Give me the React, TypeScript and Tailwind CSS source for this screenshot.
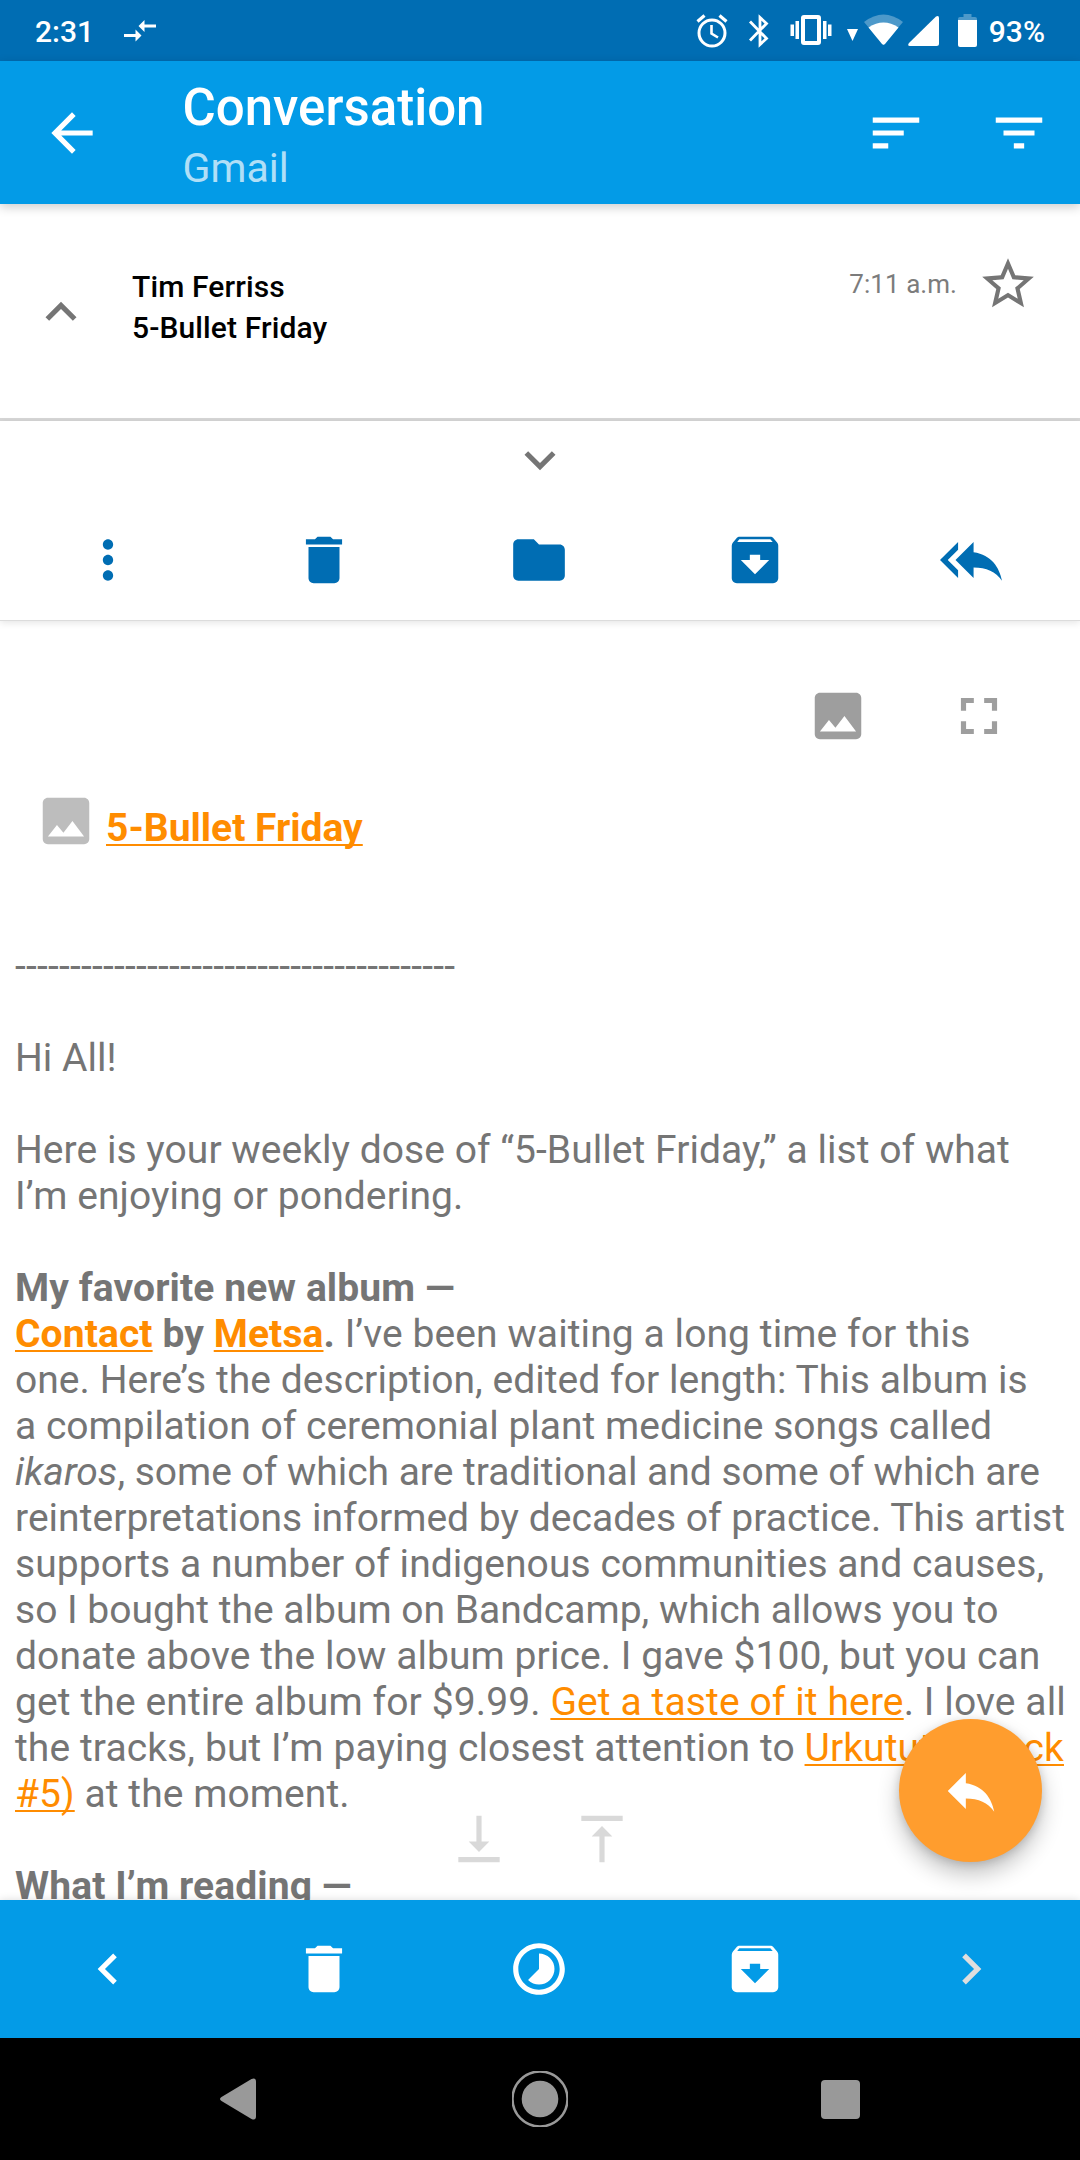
import type { ReactNode } from "react";

const paths = {
  back: "M20 11H7.83l5.59-5.59L12 4l-8 8 8 8 1.41-1.41L7.83 13H20v-2z",
  sort: "M3 18h6v-2H3v2zM3 6v2h18V6H3zm0 7h12v-2H3v2z",
  filter: "M10 18h4v-2h-4v2zM3 6v2h18V6H3zm3 7h12v-2H6v2z",
  up: "M12 8l-6 6 1.41 1.41L12 10.83l4.59 4.58L18 14z",
  down: "M16.59 8.59L12 13.17 7.41 8.59 6 10l6 6 6-6z",
  left: "M15.41 7.41L14 6l-6 6 6 6 1.41-1.41L10.83 12z",
  right: "M10 6L8.59 7.41 13.17 12l-4.58 4.59L10 18l6-6z",
  star: "M22 9.24l-7.19-.62L12 2 9.19 8.63 2 9.24l5.46 4.73L5.82 21 12 17.27 18.18 21l-1.63-7.03L22 9.24zM12 15.4l-3.76 2.27 1-4.28-3.32-2.88 4.38-.38L12 6.1l1.71 4.04 4.38.38-3.32 2.88 1 4.28L12 15.4z",
  more: "M12 8c1.1 0 2-.9 2-2s-.9-2-2-2-2 .9-2 2 .9 2 2 2zm0 2c-1.1 0-2 .9-2 2s.9 2 2 2 2-.9 2-2-.9-2-2-2zm0 6c-1.1 0-2 .9-2 2s.9 2 2 2 2-.9 2-2-.9-2-2-2z",
  trash: "M6 19c0 1.1.9 2 2 2h8c1.1 0 2-.9 2-2V7H6v12zM19 4h-3.5l-1-1h-5l-1 1H5v2h14V4z",
  folder: "M10 4H4c-1.1 0-1.99.9-1.99 2L2 18c0 1.1.9 2 2 2h16c1.1 0 2-.9 2-2V8c0-1.1-.9-2-2-2h-8l-2-2z",
  archive: "M20.54 5.23l-1.39-1.68C18.88 3.21 18.47 3 18 3H6c-.47 0-.88.21-1.16.55L3.46 5.23C3.17 5.57 3 6.02 3 6.5V19c0 1.1.9 2 2 2h14c1.1 0 2-.9 2-2V6.5c0-.48-.17-.93-.46-1.27zM12 17.5L6.5 12H10v-2h4v2h3.5L12 17.5zM5.12 5l.81-1h12l.94 1H5.12z",
  replyAll: "M7 8V5l-7 7 7 7v-3l-4-4 4-4zm6 1V5l-7 7 7 7v-4.1c5 0 8.5 1.6 11 5.1-1-5-4-10-11-11z",
  reply: "M10 9V5l-7 7 7 7v-4.1c5 0 8.5 1.6 11 5.1-1-5-4-10-11-11z",
  image: "M21 19V5c0-1.1-.9-2-2-2H5c-1.1 0-2 .9-2 2v14c0 1.1.9 2 2 2h14c1.1 0 2-.9 2-2zM8.5 13.5l2.5 3.01L14.5 12l4.5 6H5l3.5-4.5z",
  fullscreen: "M7 14H5v5h5v-2H7v-3zm-2-4h2V7h3V5H5v5zm12 7h-3v2h5v-5h-2v3zM14 5v2h3v3h2V5h-5z",
  toBottom: "M16 13h-3V3h-2v10H8l4 4 4-4zM4 19v2h16v-2H4z",
  toTop: "M8 11h3v10h2V11h3l-4-4-4 4zM4 3v2h16V3H4z",
  timelapse: "M16.24 7.76C15.07 6.59 13.54 6 12 6v6l-4.24 4.24c2.34 2.34 6.14 2.34 8.49 0 2.34-2.34 2.34-6.14-.01-8.48zM12 2C6.48 2 2 6.48 2 12s4.48 10 10 10 10-4.48 10-10S17.52 2 12 2zm0 18c-4.42 0-8-3.58-8-8s3.58-8 8-8 8 3.58 8 8-3.58 8-8 8z",
};

function Icon({ name, className = "" }: { name: keyof typeof paths; className?: string }) {
  return (
    <svg viewBox="0 0 24 24" fill="currentColor" className={`size-[62px] shrink-0 ${className}`}>
      <path d={paths[name]} />
    </svg>
  );
}

function StatusBar() {
  return (
    <header className="flex h-[61px] items-start bg-[#006db3] text-[30px] leading-[61px] font-medium text-white">
      <span className="ml-[35px] w-[89px] pt-px">2:31</span>
      <svg viewBox="0 0 32 22" width="32" height="22" fill="currentColor" className="mt-5">
        <path d="M0 14h11.500V9.500L17.500 15.500 11.500 21.500V17H0zM32 4.500H20.500V0L14.500 6 20.500 12V7.500H32z" />
      </svg>
      <div className="flex-1" />
      <svg viewBox="0 0 32 34" width="32" height="34" fill="none" stroke="currentColor" className="mt-3.5">
        <circle cx="16" cy="19" r="13" strokeWidth="3" />
        <path d="M15.500 11v8.500l6.500 4" strokeWidth="2.600" />
        <path d="M1.500 7.500l7-6M30.500 7.500l-7-6" strokeWidth="3.200" />
      </svg>
      <svg viewBox="0 0 22 34" width="22" height="34" fill="none" stroke="currentColor" strokeWidth="2.800" className="mt-3.5 ml-[20px]">
        <path d="M2 7.500L18.500 24.500 12 30.500V3.500l6.500 6L2 26.500" />
      </svg>
      <svg viewBox="0 0 42 32" width="42" height="32" fill="currentColor" className="mt-3.5 ml-[20px]">
        <path fillRule="evenodd" d="M14 1h14a3 3 0 0 1 3 3v24a3 3 0 0 1-3 3H14a3 3 0 0 1-3-3V4a3 3 0 0 1 3-3zm1 4v22h12V5zM5.500 7H9v18H5.500zM.500 10.500H4V22H.500zM33 7h3.500v18H33zM38 10.500h3.500V22H38z" />
      </svg>
      <svg viewBox="0 0 11 12" width="11" height="12" fill="currentColor" className="mt-[29px] ml-[15px]">
        <path d="M0 0h11L5.500 12z" />
      </svg>
      <svg viewBox="0 0 39 31" width="39" height="31" fill="currentColor" className="mt-3.5 ml-[6px]">
        <path opacity=".3" d="M0 8Q19.500-7 39 8L19.500 31z" />
        <path d="M4.500 13.500Q19.500 3.500 34.500 13.500L21 30q-1.500 1.500-3 0z" />
      </svg>
      <svg viewBox="0 0 31 31" width="31" height="31" fill="currentColor" className="mt-[15px] ml-[5px]">
        <path d="M1 28L28 1.500Q31 0 31 3v25.500q0 2.500-2.500 2.500H2Q-1 31 1 28z" />
      </svg>
      <svg viewBox="0 0 19 33" width="19" height="33" fill="currentColor" className="mt-3.5 ml-[19px]">
        <path opacity=".3" d="M5.500 0h8v3H17q2 0 2 2v1H0V5q0-2 2-2h3.500z" />
        <path d="M0 6h19v25q0 2-2 2H2q-2 0-2-2z" />
      </svg>
      <span className="mr-[35px] ml-[12px] pt-px">93%</span>
    </header>
  );
}

function AppBar() {
  return (
    <div className="relative z-10 flex h-[143px] items-center bg-[#039be7] text-white shadow-[0_3px_10px_rgba(0,0,0,0.2)]">
      <Icon name="back" className="ml-[40.5px]" />
      <div className="ml-[80px] flex-1 pt-[10px]">
        <h1 className="text-[51px] leading-[60px] font-medium">Conversation</h1>
        <p className="text-[41px] leading-[60px] text-white/70">Gmail</p>
      </div>
      <Icon name="sort" className="mr-[61px]" />
      <Icon name="filter" className="mr-[30.5px]" />
    </div>
  );
}

function MessageHeader() {
  return (
    <section className="flex h-[217px] border-b-[3px] border-[#d6d6d6] text-black">
      <Icon name="up" className="mt-[77px] ml-[29.5px] text-[#757575]" />
      <div className="mt-[62px] ml-[40.5px] flex-1 text-[30px] leading-[41px] font-medium tracking-[0.110px]">
        <p>Tim Ferriss</p>
        <p>5-Bullet Friday</p>
      </div>
      <span className="mt-[62px] text-[26px] leading-[37px] tracking-[0.050px] text-[#7c7c7c]">7:11 a.m.</span>
      <Icon name="star" className="mt-[49px] mr-[41px] ml-[20px] text-[#757575]" />
    </section>
  );
}

function MessageActions() {
  return (
    <section className="relative z-10 h-[200px] border-b border-[#dcdcdc] bg-white shadow-[0_2px_7px_rgba(0,0,0,0.1)]">
      <div className="flex justify-center pt-[7.5px] text-[#757575]">
        <Icon name="down" />
      </div>
      <div className="mt-[38px] mr-px grid grid-cols-5 justify-items-center text-[#006db3]">
        <Icon name="more" />
        <Icon name="trash" />
        <Icon name="folder" />
        <Icon name="archive" />
        <Icon name="replyAll" />
      </div>
    </section>
  );
}

function Link({ children }: { children: ReactNode }) {
  return (
    <a className="text-[#ff8c00] underline decoration-2 underline-offset-[3px] [text-decoration-skip-ink:none]">
      {children}
    </a>
  );
}

function MessageBody() {
  return (
    <main className="relative h-[1279px] overflow-hidden pt-[64px] text-[39px] leading-[46px] text-[#757575]">
      <div className="flex justify-end gap-[79px] pr-[70.5px] text-[#9e9e9e]">
        <Icon name="image" />
        <Icon name="fullscreen" />
      </div>
      <div className="mt-[42.5px] ml-[34.5px] flex gap-[9.5px]">
        <Icon name="image" className="text-[#bdbdbd]" />
        <b className="pt-[15.5px]">
          <Link>5-Bullet Friday</Link>
        </b>
      </div>
      <div className="mt-[91.5px] ml-[15px] whitespace-nowrap">
        <p className="tracking-[0.230px]">{"-".repeat(40)}</p>
        <p className="mt-[46px]">Hi All!</p>
        <div className="mt-[46px]">
          <p className="tracking-[0.043px]">Here is your weekly dose of “5-Bullet Friday,” a list of what</p>
          <p className="tracking-[0.080px]">I’m enjoying or pondering.</p>
        </div>
        <div className="mt-[46px]">
          <p className="font-bold tracking-[0.100px]">My favorite new album —</p>
          <p className="tracking-[0.090px]">
            <b>
              <Link>Contact</Link> by <Link>Metsa</Link>.
            </b>{" "}
            I’ve been waiting a long time for this
          </p>
          <p className="tracking-[0.045px]">one. Here’s the description, edited for length: This album is</p>
          <p>a compilation of ceremonial plant medicine songs called</p>
          <p className="tracking-[-0.020px]">
            <i>ikaros</i>, some of which are traditional and some of which are
          </p>
          <p className="tracking-[0.030px]">reinterpretations informed by decades of practice. This artist</p>
          <p className="tracking-[0.055px]">supports a number of indigenous communities and causes,</p>
          <p>so I bought the album on Bandcamp, which allows you to</p>
          <p className="tracking-[0.080px]">donate above the low album price. I gave $100, but you can</p>
          <p className="tracking-[0.110px]">
            get the entire album for $9.99. <Link>Get a taste of it here</Link>. I love all
          </p>
          <p className="tracking-[0.100px]">
            the tracks, but I’m paying closest attention to <Link>Urkututu (track</Link>
          </p>
          <p className="tracking-[0.070px]">
            <Link>#5)</Link> at the moment.
          </p>
        </div>
        <p className="mt-[46px] font-bold tracking-[0.100px]">What I’m reading —</p>
      </div>
      <div className="absolute bottom-[30.5px] left-[447.5px] flex gap-[61px] text-[#d9d9d9]">
        <Icon name="toBottom" />
        <Icon name="toTop" />
      </div>
      <button className="absolute right-[38px] bottom-[38px] flex size-[143px] items-center justify-center rounded-full bg-[#ff9d2e] text-white shadow-[0_12px_22px_rgba(0,0,0,0.24),0_2px_8px_rgba(0,0,0,0.14)]">
        <Icon name="reply" />
      </button>
    </main>
  );
}

function BottomBar() {
  return (
    <nav className="relative h-[138px] bg-[#039be7] pr-px text-white shadow-[0_0_8px_rgba(0,0,0,0.14)]">
      <div className="grid h-full grid-cols-5 place-items-center">
        <Icon name="left" />
        <Icon name="trash" />
        <Icon name="timelapse" />
        <Icon name="archive" />
        <Icon name="right" className="text-[#dedede]" />
      </div>
    </nav>
  );
}

function SystemNav() {
  return (
    <nav className="relative flex h-[122px] items-center bg-black text-[#999]">
      <svg viewBox="0 0 36 42" width="36" height="42" fill="currentColor" className="ml-[220px]">
        <path d="M1.500 19L31.500 1Q36-1 36 4v34q0 5-4.500 3L1.500 23q-3-2 0-4z" />
      </svg>
      <svg viewBox="0 0 56 56" width="56" height="56" className="ml-[256px]">
        <circle cx="28" cy="28" r="27.500" fill="none" stroke="currentColor" strokeWidth="2.500" />
        <circle cx="28" cy="28" r="18.300" fill="currentColor" />
      </svg>
      <div className="ml-[253px] h-[39px] w-[39px] rounded-[4px] bg-[#999]" />
    </nav>
  );
}

export default function App() {
  return (
    <div className="h-[2160px] w-[1080px] overflow-hidden bg-white font-['Roboto',sans-serif]">
      <StatusBar />
      <AppBar />
      <MessageHeader />
      <MessageActions />
      <MessageBody />
      <BottomBar />
      <SystemNav />
    </div>
  );
}
